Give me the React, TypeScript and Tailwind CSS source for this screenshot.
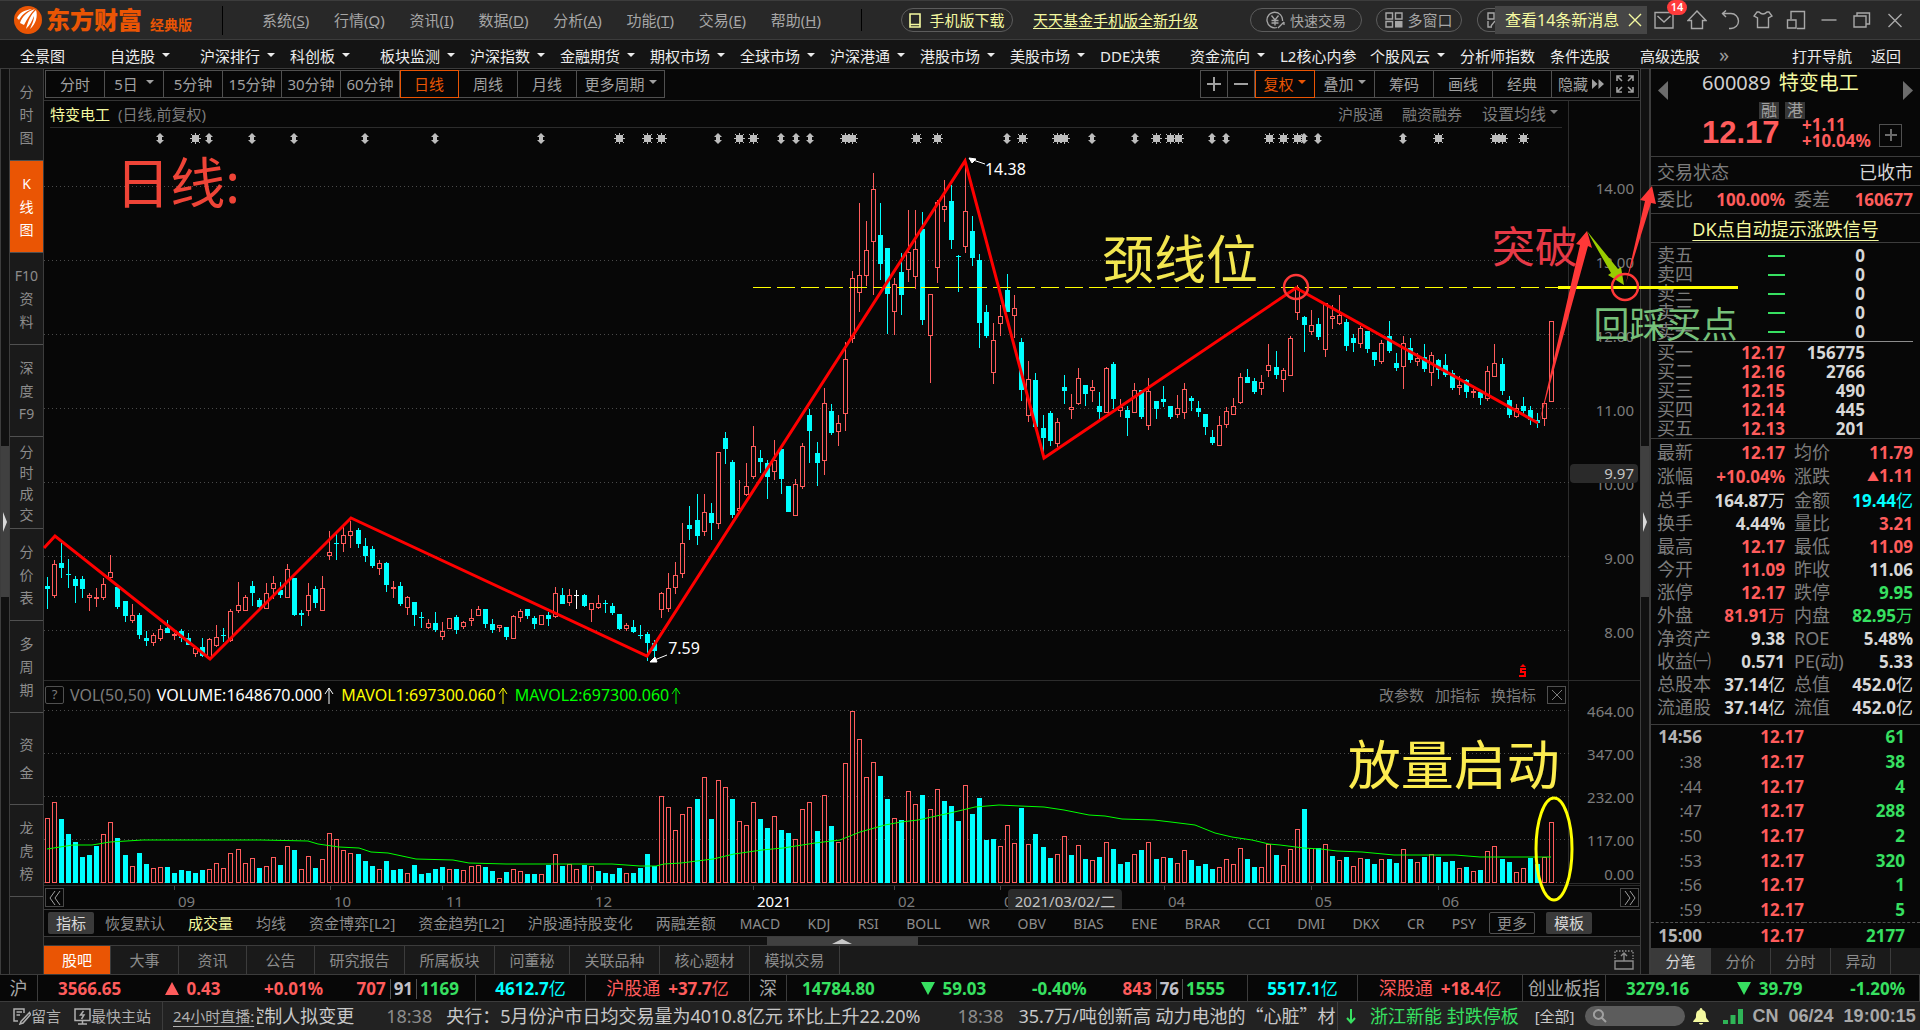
import type { ReactNode } from "react";
import clsx from "clsx";

const UP = "#ff5c5c";
const DOWN = "#00ffff";

// One entry per trading day: kind (r rise, c fall, w flat), then high, body top,
// body bottom and low. Offsets run down from the 13.00 line, 222 steps to one yuan.
const CANDLES = `
c 950 978 987 1047,r 900 912 1007 1014,c 850 909 924 953,c 897 941 944 983,c 948 957 978 1028,c 948 957 987 1014,
r 998 1005 1013 1052,r 984 1010 1016 1040,r 953 972 1014 1020,r 885 936 954 960,c 978 980 1041 1047,c 1023 1023 1068 1086,
r 1032 1065 1083 1089,c 1060 1065 1125 1137,c 1113 1134 1143 1158,r 1120 1126 1149 1158,r 1095 1107 1137 1143,c 1080 1104 1119 1119,
r 1118 1121 1128 1140,c 1108 1113 1134 1146,c 1120 1134 1155 1156,r 1158 1163 1182 1190,c 1134 1161 1188 1191,r 1134 1137 1194 1196,
r 1095 1131 1158 1161,c 1104 1125 1128 1146,r 1048 1053 1143 1146,r 966 1035 1053 1059,r 1005 1011 1053 1053,c 963 978 999 1038,
c 1014 1020 1041 1044,r 969 999 1047 1047,r 948 969 987 1017,c 966 990 1005 1014,r 912 927 1014 1014,c 953 953 1065 1068,
c 1050 1059 1065 1098,r 969 1005 1053 1068,c 978 987 1029 1044,r 948 984 1053 1053,r 813 876 888 900,c 822 849 852 900,
r 800 825 852 876,r 783 813 827 864,c 804 810 852 864,c 834 858 888 906,c 858 867 918 924,r 900 909 927 945,
c 906 909 975 996,r 963 981 986 1014,c 966 978 1032 1038,r 1008 1011 1043 1065,c 1026 1026 1065 1098,c 1056 1071 1074 1104,
r 1077 1089 1104 1107,c 1056 1089 1110 1116,r 1086 1113 1131 1140,r 1074 1074 1107 1107,c 1065 1071 1110 1122,r 1083 1086 1102 1107,
r 1047 1074 1083 1098,r 1038 1047 1068 1068,c 1047 1047 1092 1104,c 1077 1092 1110 1119,r 1094 1096 1103 1116,c 1101 1101 1131 1140,
r 1065 1068 1137 1137,r 1047 1053 1074 1086,c 1047 1047 1068 1077,c 1068 1074 1092 1107,r 1065 1065 1095 1095,c 1056 1065 1077 1098,
r 981 999 1071 1074,c 984 1005 1032 1032,r 987 1005 1029 1038,w 990 1005 1008 1047,c 1002 1005 1038 1041,r 1028 1030 1050 1086,
r 1005 1029 1043 1047,c 1020 1028 1031 1059,c 1028 1038 1059 1065,c 1062 1062 1107 1110,r 1089 1095 1107 1112,c 1080 1101 1116 1119,
c 1095 1125 1128 1137,c 1116 1122 1149 1203,c 1140 1150 1173 1194,r 997 1000 1049 1074,r 939 985 1046 1055,r 906 946 983 1001,
r 789 850 941 953,c 738 795 807 840,c 702 780 828 855,r 702 757 815 828,c 729 759 789 840,r 576 577 791 807,
c 516 534 567 612,c 600 606 765 773,r 660 745 752 757,r 609 679 704 709,r 498 559 650 657,c 570 594 606 639,
c 600 609 651 717,r 540 600 635 660,c 560 567 657 702,c 678 678 756 756,r 657 673 767 767,r 549 559 680 687,
c 447 465 513 609,c 546 579 609 678,r 384 430 602 645,c 432 453 519 525,r 465 490 517 558,r 246 298 461 513,
r 33 55 236 249,r -171 46 98 156,r -117 -30 47 78,r -261 -212 -53 105,c -171 -75 12 60,c -37 -37 102 222,
r 54 73 155 225,c -20 36 105 165,r -150 -23 29 66,r -150 -32 52 87,c -144 -93 180 195,r 102 102 227 369,
r -180 -174 23 69,r -240 -161 -151 -115,c -225 -177 -60 -33,c -15 -12 -9 96,r -306 -147 -40 -21,c -132 -87 -6 18,
c -18 -1 189 264,c 135 156 228 234,r 189 240 338 372,r 135 169 191 228,c 42 90 156 156,r 105 145 167 234,
c 234 246 390 423,r 303 358 467 486,c 339 360 501 501,c 465 504 534 590,c 453 459 543 558,r 474 487 551 561,
c 345 381 393 432,r 402 442 449 477,r 324 355 431 435,c 375 375 402 438,r 360 382 392 426,c 396 438 456 477,
r 321 325 458 458,c 306 312 417 447,r 417 440 452 471,c 438 450 474 528,r 369 391 458 458,c 390 390 471 477,
r 354 394 497 510,c 423 423 447 477,c 378 417 426 441,c 438 438 471 477,r 405 445 464 474,r 369 388 458 477,
c 408 414 423 453,c 423 444 456 471,c 462 462 501 525,c 510 531 549 555,r 468 496 557 557,r 441 454 494 504,
r 414 439 464 464,r 339 352 428 432,c 327 351 369 369,c 354 363 396 402,r 345 367 386 405,r 252 316 332 351,
c 273 321 345 357,r 325 330 361 395,r 228 235 347 347,r 75 85 158 180,c 168 171 195 276,r 150 195 215 225,
c 174 192 231 240,r 130 130 269 290,r 135 169 178 207,r 105 166 191 195,c 177 186 258 273,c 222 233 248 276,
r 198 205 251 264,c 213 213 267 279,c 276 276 300 318,r 240 250 305 312,c 183 228 273 279,c 279 309 324 333,
r 228 250 320 387,c 234 264 300 309,r 280 295 305 318,c 252 290 327 336,r 276 286 338 378,c 297 300 330 357,
c 282 316 345 351,c 330 340 384 390,r 348 375 384 405,c 357 360 396 414,r 387 393 399 414,c 393 395 414 435,
r 318 334 416 422,r 252 310 352 352,c 294 312 393 405,c 408 420 465 474,r 432 445 470 474,c 411 438 453 465,
c 438 450 480 495,c 459 480 489 504,r 424 430 476 498,r 184 184 426 426`
  .trim()
  .split(",")
  .map((row) => {
    const [kind, ...rest] = row.trim().split(" ");
    const [high, top, bottom, low] = rest.map(Number);
    return { kind, high, top, bottom, low };
  });

// Daily volume in the same order; positive is a rising day, negative a falling one.
const VOLUMES = [
  196, 244, -191, -146, -122, -77, -83, -110, 148, 184, -134, -83, 50, -89, -56, 44, 47, -47, -29, -38, -35, -29, -38, 41, 61,
  44, 91, 103, 59, 76, -44, 52, 79, -53, 112, -98, 41, 82, -44, 73, 151, 133, 100, 89, -86, -65, -50, 41, -65, -38, -41, 29,
  -53, -26, -29, -41, -47, 41, -41, 38, 50, 55, -47, -35, 16, -32, 41, 35, -26, -26, 26, -53, 86, -50, 58, 43, -53, 52, -35,
  -29, -26, -44, 29, -29, -44, -86, -50, 262, 229, 160, 208, 229, -251, 319, -191, 310, 289, -251, 187, 175, 244, -191, -164,
  202, -158, -149, 133, 223, 244, -155, 265, -170, 124, 361, 517, 433, 319, 364, -320, -251, 196, -188, 277, 238, -263, 223,
  283, -245, -230, -185, 295, -206, -254, -128, -131, 112, 175, 121, -224, 118, -146, -107, -74, 88, 142, -83, 115, -71, 70,
  -77, 124, -101, -56, -62, 88, -98, 124, -71, 79, -74, 61, 100, -68, -50, -56, -41, 49, 73, 58, 106, -71, -47, 49, 118, -83,
  55, 103, 163, -221, 106, -104, 118, -80, 70, -77, 52, 76, -71, -56, 73, -71, -59, 103, -71, 64, -77, 88, -77, -62, -65, 46,
  -47, 37, -38, 97, 112, -71, -62, 34, 46, -74, -56, 79, 184,
];

const MAVOL =
  "47,849 73,845 92,845 110,842 143,840 261,840 308,841 318,844 339,847 359,848 371,852 388,853 416,859 453,860 469,863 506,864 580,864 612,864 640,866 656,866 664,864 681,863 713,859 734,854 762,850 783,848 815,843 840,840 860,832 885,825 901,822 918,820 950,813 975,807 999,805 1020,806 1044,807 1064,810 1089,815 1105,816 1122,819 1154,820 1171,822 1195,825 1215,833 1232,837 1252,840 1269,844 1280,845 1304,848 1321,849 1337,851 1362,852 1394,855 1455,855 1480,857 1551,857";

const ARROWS = [160, 209, 252, 294, 365, 435, 541, 718, 781, 796, 810, 1007, 1092, 1135, 1212, 1226, 1304, 1318, 1403];
const STARS = [
  195, 619, 647, 661, 739, 753, 845, 852, 916, 937, 1022, 1057, 1064, 1156, 1170, 1178, 1269, 1283, 1297, 1438, 1495, 1502, 1523,
];

const barX = (i: number) => Math.floor(47.35 + i * 7.0615);

const MENUS = [
  ["系统", "S"],
  ["行情", "Q"],
  ["资讯", "I"],
  ["数据", "D"],
  ["分析", "A"],
  ["功能", "T"],
  ["交易", "E"],
  ["帮助", "H"],
];

const NAV: [string, boolean][] = [
  ["全景图", false],
  ["自选股", true],
  ["沪深排行", true],
  ["科创板", true],
  ["板块监测", true],
  ["沪深指数", true],
  ["金融期货", true],
  ["期权市场", true],
  ["全球市场", true],
  ["沪深港通", true],
  ["港股市场", true],
  ["美股市场", true],
  ["DDE决策", false],
  ["资金流向", true],
  ["L2核心内参", false],
  ["个股风云", true],
  ["分析师指数", false],
  ["条件选股", false],
  ["高级选股", false],
];

const SIDE: { chars: string[]; leading: string; active?: boolean }[] = [
  { chars: ["分", "时", "图"], leading: "leading-[23px]" },
  { chars: ["K", "线", "图"], leading: "leading-[23px]", active: true },
  { chars: ["F10", "资", "料"], leading: "leading-[23px]" },
  { chars: ["深", "度", "F9"], leading: "leading-[23px]" },
  { chars: ["分", "时", "成", "交"], leading: "leading-[21px]" },
  { chars: ["分", "价", "表"], leading: "leading-[23px]" },
  { chars: ["多", "周", "期"], leading: "leading-[23px]" },
  { chars: ["资", "金"], leading: "leading-[28px]" },
  { chars: ["龙", "虎", "榜"], leading: "leading-[23px]" },
];

const PERIODS = ["分时", "5日", "5分钟", "15分钟", "30分钟", "60分钟", "日线", "周线", "月线"];

const MONTHS: [string, number][] = [
  ["09", 174],
  ["10", 330],
  ["11", 442],
  ["12", 591],
  ["2021", 753],
  ["02", 894],
  ["03", 1000],
  ["04", 1164],
  ["05", 1311],
  ["06", 1438],
];

const FUND_INDICATORS = ["恢复默认", "成交量", "均线", "资金博弈[L2]", "资金趋势[L2]", "沪股通持股变化", "两融差额"];
const TECH_INDICATORS = [
  "MACD", "KDJ", "RSI", "BOLL", "WR", "OBV", "BIAS", "ENE", "BRAR", "CCI", "DMI", "DKX", "CR", "PSY",
];

const TABS: [string, string][] = [
  ["股吧", "w-[67px]"],
  ["大事", "w-[68px]"],
  ["资讯", "w-[68px]"],
  ["公告", "w-[68px]"],
  ["研究报告", "w-[90px]"],
  ["所属板块", "w-[90px]"],
  ["问董秘", "w-[75px]"],
  ["关联品种", "w-[90px]"],
  ["核心题材", "w-[90px]"],
  ["模拟交易", "w-[90px]"],
];

const SELLS = ["卖五", "卖四", "卖三", "卖二", "卖一"];
const BUYS = [
  ["买一", "12.17", "156775"],
  ["买二", "12.16", "2766"],
  ["买三", "12.15", "490"],
  ["买四", "12.14", "445"],
  ["买五", "12.13", "201"],
];

const red = "text-[#ff5c5c]";
const green = "text-[#37e061]";
const white = "text-[#d8d8d8]";
const cyan = "text-[#00ffff]";

const STATS = [
  ["最新", "12.17", red, "均价", "11.79", red],
  ["涨幅", "+10.04%", red, "涨跌", "▲1.11", red],
  ["总手", "164.87万", white, "金额", "19.44亿", cyan],
  ["换手", "4.44%", white, "量比", "3.21", red],
  ["最高", "12.17", red, "最低", "11.09", red],
  ["今开", "11.09", red, "昨收", "11.06", white],
  ["涨停", "12.17", red, "跌停", "9.95", green],
  ["外盘", "81.91万", red, "内盘", "82.95万", green],
  ["净资产", "9.38", white, "ROE", "5.48%", white],
  ["收益㈠", "0.571", white, "PE(动)", "5.33", white],
  ["总股本", "37.14亿", white, "总值", "452.0亿", white],
  ["流通股", "37.14亿", white, "流值", "452.0亿", white],
];

const TICKS = [
  ["14:56", "61"],
  [":38", "38"],
  [":44", "4"],
  [":47", "288"],
  [":50", "2"],
  [":53", "320"],
  [":56", "1"],
  [":59", "5"],
  ["15:00", "2177"],
];

function Caret({ className }: { className?: string }) {
  return (
    <svg viewBox="0 0 8 4" className={clsx("h-1 w-2 shrink-0", className)} fill="currentColor" aria-hidden="true">
      <path d="M0 0H8L4 4Z" />
    </svg>
  );
}

function Icon({ label, children }: { label: string; children: ReactNode }) {
  return (
    <button aria-label={label} className="flex h-8 w-[33px] items-center justify-center text-[#a8a8a8]">
      <svg viewBox="0 0 20 20" className="size-5" fill="none" stroke="currentColor" strokeWidth="1.4">
        {children}
      </svg>
    </button>
  );
}

// The figure is bold, its 万/亿 unit is not.
function Amount({ value }: { value: string }) {
  const unit = /[万亿]$/.test(value) ? value.slice(-1) : "";
  return (
    <>
      {unit ? value.slice(0, -1) : value}
      {unit && <span className="font-normal">{unit}</span>}
    </>
  );
}

function TitleBar() {
  return (
    <header className="flex h-10 items-center border-t border-b border-[#3c3c3c] bg-[#282828] pl-[14px] text-[16px] text-[#a6a6a6]">
      <div className="flex w-[209px] items-center border-r border-black text-[#ea5504]">
        <svg viewBox="0 0 28 28" className="size-7 shrink-0" aria-hidden="true">
          <circle cx="14" cy="14" r="14" fill="#ea5504" />
          <path d="M3 12C5 7 10 4 18 3C11 6 8 9 5 14Z" fill="#fff" />
          <path d="M6 17C8 11 12 6 21 3C16 8 13 13 10 19Z" fill="#fff" />
          <path d="M12 23C14 15 17 8 22 4C24 10 22 18 16 23C19 17 20 13 20 10C18 15 16 19 12 23Z" fill="#fff" />
        </svg>
        <b className="ml-1 text-[24px] leading-7 font-black whitespace-nowrap">东方财富</b>
        <span className="mt-2 ml-2 text-[14px] font-bold whitespace-nowrap">经典版</span>
      </div>
      <nav className="flex w-[639px] shrink-0 items-center justify-between border-r border-black pr-[40px] pl-[39px] text-[15px]">
        {MENUS.map(([name, key]) => (
          <button key={key} className="whitespace-nowrap">
            {name}(<u>{key}</u>)
          </button>
        ))}
      </nav>
      <button className="ml-[39px] flex h-6 w-[112px] shrink-0 items-center justify-center gap-2 rounded-full border border-[#5c5c5c] text-[15px] text-[#f4f9a0]">
        <svg viewBox="0 0 12 15" className="h-[15px] w-3" fill="none" stroke="currentColor" strokeWidth="1.6" aria-hidden="true">
          <path d="M1 1H11V14H1ZM1 11.5H11" />
        </svg>
        手机版下载
      </button>
      <a href="#fund" className="ml-[20px] text-[15px] whitespace-nowrap text-[#f4f9a0] underline underline-offset-2">
        天天基金手机版全新升级
      </a>
      <div className="flex flex-1 items-center justify-end">
        <button className="flex h-6 w-[112px] shrink-0 items-center justify-center gap-1 rounded-full border border-[#5c5c5c] text-[14px]">
          <svg viewBox="0 0 20 18" className="h-[18px] w-5" fill="none" stroke="currentColor" strokeWidth="1.3" aria-hidden="true">
            <path d="M11 16.5A7.8 7.8 0 1 1 16.5 10M5.5 4.5L9 9L12.5 4.5M5.5 9.5H12.5M5.5 12H12.5M9 9V14.5M12 17L18 11M18 11V14" />
          </svg>
          快速交易
        </button>
        <button className="ml-[14px] flex h-6 w-[86px] shrink-0 items-center justify-center gap-1 rounded-full border border-[#5c5c5c] text-[15px]">
          <svg viewBox="0 0 18 16" className="h-4 w-[18px]" fill="none" stroke="currentColor" strokeWidth="1.4" aria-hidden="true">
            <path d="M1 1H7.500V7H1ZM10.500 1H17V7H10.500ZM1 9.500H7.500V15H1Z" />
            <path d="M10 9H17.500V15.500H10Z" fill="currentColor" stroke="none" />
          </svg>
          多窗口
        </button>
        <div className="ml-[15px] flex h-6 w-[18px] shrink-0 items-center rounded-l-full border border-r-0 border-[#5c5c5c] pl-[9px]">
          <svg viewBox="0 0 8 16" className="h-4 w-2" fill="none" stroke="currentColor" strokeWidth="1.4" aria-hidden="true">
            <path d="M7 1H1V7H7ZM1 9V15H5M4 14L8 9" />
          </svg>
        </div>
        <div className="flex h-7 w-[152px] shrink-0 items-center justify-between bg-[#464646] pr-[5px] pl-[10px] text-[16px] text-[#f4f9a0]">
          <span className="whitespace-nowrap">查看14条新消息</span>
          <button aria-label="关闭消息">
            <svg viewBox="0 0 14 14" className="size-[14px]" fill="none" stroke="currentColor" strokeWidth="1.4">
              <path d="M1 1L13 13M13 1L1 13" />
            </svg>
          </button>
        </div>
        <div className="relative flex">
          <Icon label="消息">
            <path d="M1 2.500H19V18H1ZM3.500 6L10 12L16.500 6" />
          </Icon>
          <span className="absolute -top-1 left-[20px] flex h-[15px] w-5 items-center justify-center rounded-full bg-[#ff3b3b] text-[11px] font-semibold text-white">
            14
          </span>
        </div>
        <Icon label="主页">
          <path d="M10 1L1 10.500H4.500V18.500H15.500V10.500H19Z" />
        </Icon>
        <Icon label="后退">
          <path d="M2 3.500H11A7.500 7.500 0 0 1 11 18.500H9M6 0.500L2.500 3.500L6 7" />
        </Icon>
        <Icon label="皮肤">
          <path d="M6 2Q10 6 14 2H16L19 6L15.500 8V17.500H4.500V8L1 6L4 2Z" />
        </Icon>
        <Icon label="窗口">
          <path d="M5 9V1.500H18.500V18.500H11M1.500 10H10V18H1.500Z" />
        </Icon>
        <Icon label="最小化">
          <path d="M2.500 10H17.500" />
        </Icon>
        <Icon label="还原">
          <path d="M2 6H14V17H2ZM5 6V3H17.500V14H14" />
        </Icon>
        <Icon label="关闭">
          <path d="M3.500 4L16.500 17M16.500 4L3.500 17" />
        </Icon>
        <span className="w-[9px]" />
      </div>
    </header>
  );
}

function MainNav() {
  return (
    <nav className="flex h-[29px] items-center border-b border-[#3c3c3c] bg-[#141414] pt-[5px] pl-5 text-[15px] text-[#ececec]">
      <div className="grid min-w-0 flex-1 grid-cols-[repeat(18,90fr)_79fr]">
        {NAV.map(([label, hasMenu]) => (
          <button key={label} className="flex min-w-0 items-center gap-[7px] whitespace-nowrap">
            {label}
            {hasMenu && <Caret className="mb-1" />}
          </button>
        ))}
      </div>
      <button className="w-[73px] pb-1 text-left text-[20px] leading-5 text-[#9a9a9a]">»</button>
      <button className="w-[79px] text-left whitespace-nowrap">打开导航</button>
      <button className="w-[49px] text-left">返回</button>
    </nav>
  );
}

function Toolbar() {
  const cell = "flex h-7 items-center justify-center border border-l-0 border-[#505050] whitespace-nowrap";
  return (
    <div className="flex h-8 items-start justify-between border-b border-[#333] pt-px pl-px text-[15px] text-[#a0a0a0]">
      <div className="flex border-l border-[#505050]">
        {PERIODS.map((label) => (
          <button
            key={label}
            className={clsx(
              cell,
              "w-[59px]",
              label === "日线" && "border-[#ea5504]! text-[#ea5504] outline outline-[#ea5504] -outline-offset-1",
            )}
          >
            {label}
            {label === "5日" && <Caret className="mb-1 ml-2" />}
          </button>
        ))}
        <button className={clsx(cell, "w-[88px]")}>
          更多周期
          <Caret className="mb-1 ml-1" />
        </button>
      </div>
      <div className="mr-px flex border-l border-[#505050]">
        <button aria-label="放大" className={clsx(cell, "w-[27px]")}>
          <svg viewBox="0 0 14 14" className="size-[14px]" stroke="currentColor" strokeWidth="2">
            <path d="M7 0V14M0 7H14" />
          </svg>
        </button>
        <button aria-label="缩小" className={clsx(cell, "w-[27px]")}>
          <svg viewBox="0 0 14 14" className="size-[14px]" stroke="currentColor" strokeWidth="2">
            <path d="M0 7H14" />
          </svg>
        </button>
        <button className={clsx(cell, "w-[60px] border-[#ea5504]! text-[#ea5504] outline outline-[#ea5504] -outline-offset-1")}>
          复权
          <Caret className="mb-1 ml-1" />
        </button>
        <button className={clsx(cell, "w-[60px]")}>
          叠加
          <Caret className="mb-1 ml-1" />
        </button>
        {["筹码", "画线", "经典"].map((label) => (
          <button key={label} className={clsx(cell, "w-[59px]")}>
            {label}
          </button>
        ))}
        <button className={clsx(cell, "w-[59px] gap-1")}>
          隐藏
          <svg viewBox="0 0 12 10" className="h-[10px] w-3" fill="currentColor" aria-hidden="true">
            <path d="M0 0L5.500 5L0 10ZM6.500 0L12 5L6.500 10Z" />
          </svg>
        </button>
        <button aria-label="全屏" className={clsx(cell, "w-7")}>
          <svg viewBox="0 0 18 18" className="size-[18px]" fill="none" stroke="currentColor" strokeWidth="1.6">
            <path d="M1 6V1H6M1 1L6 6M12 1H17V6M17 1L12 6M1 12V17H6M1 17L6 12M17 12V17H12M17 17L12 12" />
          </svg>
        </button>
      </div>
    </div>
  );
}

function PriceChart() {
  return (
    <svg viewBox="44 128 1524 552" preserveAspectRatio="none" className="block h-[552px] w-full overflow-visible">
      <g stroke="#4a4a4a" strokeDasharray="1 3" shapeRendering="crispEdges">
        {[186, 260, 334, 408, 482, 556, 630].map((y) => (
          <line key={y} x1="44" x2="1571" y1={y + 0.5} y2={y + 0.5} />
        ))}
      </g>
      <g fill="#bdbdbd">
        {ARROWS.map((x) => (
          <path key={x} d={`M${x} 133l4 4h-2v3h2l-4 4l-4 -4h2v-3h-2Z`} />
        ))}
        {STARS.map((x) => (
          <g key={x}>
            <rect x={x - 3} y="135" width="7" height="7" />
            <path d={`M${x + 0.5} 133V144M${x - 5} 138.500H${x + 6}M${x - 4} 134L${x + 5} 143M${x + 5} 134L${x - 4} 143`} stroke="#bdbdbd" />
          </g>
        ))}
      </g>
      <g shapeRendering="crispEdges">
        {CANDLES.map(({ kind, high, top, bottom, low }, i) => {
          const x = barX(i);
          const y = (v: number) => Math.round(260 + v / 3);
          const color = kind === "r" ? UP : kind === "c" ? DOWN : "#fff";
          const body = Math.max(1, y(bottom) - y(top));
          return (
            <g key={i} fill={color}>
              <rect x={x} y={y(high)} width="1" height={Math.max(1, y(low) - y(high))} />
              <rect x={x - 2} y={y(top)} width="5" height={body} />
              {kind === "r" && body > 2 && <rect x={x - 1} y={y(top) + 1} width="3" height={body - 2} fill="#070707" />}
            </g>
          );
        })}
      </g>
      <line x1="753" x2="1568" y1="287.500" y2="287.500" stroke="#ffff00" strokeDasharray="18 6" shapeRendering="crispEdges" />
      <polyline
        points="44,548 55,536 210,659 351,518 647,656 965,161 1044,458 1296,288 1538,423"
        fill="none"
        stroke="#ff0000"
        strokeWidth="3"
      />
      <g stroke="#fff" fill="#fff" strokeWidth="1">
        <path d="M985 164L970 159M969 158L976 159L972 163Z" />
        <path d="M667 655L652 661M650 662L655 657L657 662Z" />
      </g>
      <g fill="none" stroke="#ff0000" strokeWidth="2">
        <path d="M1526 669H1521V672H1525V676H1519" />
        <path d="M1523 664L1526 667H1520Z" fill="#ff0000" stroke="none" />
      </g>
    </svg>
  );
}

function VolumeChart() {
  return (
    <svg viewBox="44 709 1524 176" preserveAspectRatio="none" className="block h-[176px] w-full overflow-visible">
      <g stroke="#4a4a4a" strokeDasharray="1 3" shapeRendering="crispEdges">
        {[710, 753, 796, 839, 882].map((y) => (
          <line key={y} x1="44" x2="1571" y1={y + 0.5} y2={y + 0.5} />
        ))}
      </g>
      <g shapeRendering="crispEdges">
        {VOLUMES.map((volume, i) => {
          const x = barX(i);
          const h = Math.round(Math.abs(volume) / 3);
          return (
            <g key={i} fill={volume > 0 ? UP : DOWN}>
              <rect x={x - 2} y={883 - h} width="5" height={h} />
              {volume > 0 && <rect x={x - 1} y={884 - h} width="3" height={h - 2} fill="#070707" />}
            </g>
          );
        })}
      </g>
      <polyline points={MAVOL} fill="none" stroke="#00ff00" strokeWidth="1" />
    </svg>
  );
}

function Rise({ className }: { className: string }) {
  return (
    <svg viewBox="0 0 10 17" className={clsx("mr-[7px] ml-[2px] h-[17px] w-[10px]", className)} fill="none" stroke="currentColor" aria-hidden="true">
      <path d="M5 17V1M1 7L5 1L9 7" />
    </svg>
  );
}

function ChartArea() {
  return (
    <>
      <div className="flex">
        <div className="min-w-0 flex-1 border-r border-[#2c2c2c]">
          <div className="mx-[6px] flex h-[27px] items-center justify-between border-b border-[#2c2c2c] text-[15px] text-[#7c7c7c]">
            <div>
              <span className="text-[#f4f9a0]">特变电工</span>
              <span className="ml-2">(日线,前复权)</span>
            </div>
            <div className="mr-1 flex items-center">
              <span>沪股通</span>
              <span className="ml-[19px]">融资融券</span>
              <button className="ml-[20px] flex items-center gap-1 text-[16px]">
                设置均线 <Caret className="mb-1" />
              </button>
            </div>
          </div>
          <PriceChart />
        </div>
        <div className="relative w-[71px] pt-[50px] pr-[6px] text-right text-[15px] text-[#7c7c7c]">
          {["14.00", "13.00", "12.00", "11.00", "10.00", "9.00", "8.00"].map((p) => (
            <div key={p} className="h-[74px] leading-[74px]">
              {p}
            </div>
          ))}
          <div className="absolute top-[363px] right-[2px] left-px h-[19px] rounded-sm bg-[#2a2a2a] pr-1 leading-[19px] text-[#c4c4c4]">
            9.97
          </div>
        </div>
      </div>
      <div className="flex border-t border-[#2c2c2c]">
        <div className="min-w-0 flex-1 border-r border-[#2c2c2c]">
          <div className="flex h-7 items-center pr-[2px] pl-[1px] text-[15px] text-[#7c7c7c]">
            <button className="flex h-[18px] w-[19px] items-center justify-center rounded-xs border border-[#505050] text-[13px]">?</button>
            <div className="ml-[6px] flex items-center text-[16px]">
              <span className="mr-[6px]">VOL(50,50)</span>
              <span className="text-white">VOLUME:1648670.000</span>
              <Rise className="text-white" />
              <span className="text-[#ffff00]">MAVOL1:697300.060</span>
              <Rise className="text-[#ffff00]" />
              <span className="text-[#00ff00]">MAVOL2:697300.060</span>
              <Rise className="text-[#00ff00]" />
            </div>
            <span className="flex-1" />
            <button>改参数</button>
            <button className="ml-[11px]">加指标</button>
            <button className="ml-[11px]">换指标</button>
            <button aria-label="关闭指标" className="ml-[11px] flex h-[18px] w-[19px] items-center justify-center border border-[#505050]">
              <svg viewBox="0 0 10 10" className="size-[10px]" stroke="currentColor">
                <path d="M0 0L10 10M10 0L0 10" />
              </svg>
            </button>
          </div>
          <VolumeChart />
        </div>
        <div className="mb-px w-[71px] border-b border-[#2c2c2c] pt-[9px] pr-[6px] text-right text-[15px] text-[#7c7c7c]">
          {["464.00", "347.00", "232.00", "117.00"].map((v) => (
            <div key={v} className="h-[43px] leading-[43px]">
              {v}
            </div>
          ))}
          <div className="h-5 leading-6">0.00</div>
        </div>
      </div>
      <div className="relative flex h-6 items-center justify-between border-t border-[#2c2c2c] px-px text-[15px] text-[#7c7c7c]">
        <button aria-label="更早" className="flex h-[19px] w-[19px] items-center justify-center border border-[#484848]">
          <svg viewBox="0 0 12 14" className="h-[14px] w-3" fill="none" stroke="#a0a0a0">
            <path d="M6 0L1 7L6 14M11 0L6 7L11 14" />
          </svg>
        </button>
        {MONTHS.map(([label, x]) => (
          <span
            key={label}
            className={clsx("absolute top-0 h-[23px] pl-1 leading-[30px]", label === "2021" && "text-white")}
            style={{ left: `${((x - 44) / 1596) * 100}%` }}
          >
            <i className="absolute top-0 left-0 h-1 w-px bg-[#484848]" />
            {label}
          </span>
        ))}
        <span className="absolute top-[3px] left-[60.4%] h-5 w-[114px] rounded-t-sm bg-[#2a2a2a] text-center leading-6 text-[#c4c4c4]">
          2021/03/02/二
        </span>
        <button aria-label="更晚" className="flex h-[19px] w-[19px] items-center justify-center border border-[#484848]">
          <svg viewBox="0 0 12 14" className="h-[14px] w-3" fill="none" stroke="#a0a0a0">
            <path d="M1 0L6 7L1 14M6 0L11 7L6 14" />
          </svg>
        </button>
      </div>
    </>
  );
}

function BottomBars() {
  return (
    <>
      <div className="flex h-[27px] items-center border-t border-[#3c3c3c] pl-1 text-[15px] whitespace-nowrap text-[#8c8c8c]">
        <button className="h-[22px] w-[46px] rounded-xs bg-[#3a3a3a] leading-[22px] text-[#d8d8d8]">指标</button>
        <div className="ml-[11px] flex shrink-0 items-center gap-[23px]">
          {FUND_INDICATORS.map((name) => (
            <button key={name} className={clsx(name === "成交量" && "text-[#f4f9a0]")}>
              {name}
            </button>
          ))}
        </div>
        <div className="ml-6 flex min-w-0 flex-1 items-center justify-between pr-[13px] text-[14px]">
          {TECH_INDICATORS.map((name) => (
            <button key={name}>{name}</button>
          ))}
        </div>
        <button className="h-[22px] w-[46px] rounded-xs border border-[#505050] leading-5">更多</button>
        <button className="mr-[48px] ml-[11px] h-[22px] w-[46px] rounded-xs bg-[#3a3a3a] leading-[22px] text-[#d8d8d8]">模板</button>
      </div>
      <div className="flex h-[10px] justify-center border-y border-[#3c3c3c] bg-[#111]">
        <button aria-label="展开" className="flex w-[151px] items-center justify-center bg-[#404040]">
          <svg viewBox="0 0 20 5" className="h-[5px] w-5" fill="#c8c8c8">
            <path d="M10 0L20 5H0Z" />
          </svg>
        </button>
      </div>
      <div className="flex h-7 items-center bg-[#1a1a1a] text-[15px] text-[#8c8c8c]">
        {TABS.map(([label, width], i) => (
          <button
            key={label}
            className={clsx("h-full border-r border-[#3c3c3c]", width, i === 0 && "bg-[#ea5504] text-white")}
          >
            {label}
          </button>
        ))}
        <button aria-label="弹出" className="mr-[6px] ml-auto">
          <svg viewBox="0 0 20 20" className="size-5" fill="none" stroke="#8c8c8c" strokeWidth="1.4">
            <path d="M1 19V11H19V19Z" />
            <path d="M1 9V1H19V9" strokeDasharray="1.500 1.500" />
            <path d="M10 11V3M7 6L10 3L13 6" />
          </svg>
        </button>
      </div>
    </>
  );
}

function Splitter({ label }: { label: string }) {
  return (
    <div className="flex w-[10px] shrink-0 items-center border-x border-[#3c3c3c] bg-[#111]">
      <button aria-label={label} className="flex h-[151px] w-full items-center justify-center bg-[#404040]">
        <svg viewBox="0 0 4 20" className="h-5 w-1" fill="#d8d8d8">
          <path d="M0 0L4 10L0 20Z" />
        </svg>
      </button>
    </div>
  );
}

function QuotePanel() {
  return (
    <aside className="flex w-[270px] shrink-0 flex-col border-l border-[#3c3c3c] text-[17px] text-[#7c7c7c]">
      <div className="flex h-[88px] border-b border-[#3c3c3c] px-[7px]">
        <button aria-label="上一只" className="mt-3 h-[19px] w-[10px]">
          <svg viewBox="0 0 10 19" fill="#6c6c6c">
            <path d="M10 0V19L0 9.500Z" />
          </svg>
        </button>
        <div className="min-w-0 flex-1">
          <h1 className="flex h-[28px] items-center gap-2 pl-[34px] text-[20px] text-[#d0d0d0]">
            600089 <span className="text-[#f4f9a0]">特变电工</span>
          </h1>
          <div className="mt-[5px] ml-[91px] flex h-[17px] gap-[6px] text-center text-[16px] leading-[17px] text-[#a0a0a0]">
            <span className="w-5 bg-[#363636]">融</span>
            <span className="w-5 bg-[#363636]">港</span>
          </div>
          <div className="ml-[34px] flex h-7 items-center font-bold text-[#ff5c5c]">
            <span className="w-[100px] font-['Liberation_Sans',sans-serif] text-[31px] leading-7">12.17</span>
            <span className="w-[77px] leading-4">
              +1.11
              <br />
              +10.04%
            </span>
            <button aria-label="加自选" className="mt-1 flex size-[23px] shrink-0 items-center justify-center border border-[#505050]">
              <svg viewBox="0 0 12 12" className="size-3" stroke="#6c6c6c" strokeWidth="2">
                <path d="M6 0V12M0 6H12" />
              </svg>
            </button>
          </div>
        </div>
        <button aria-label="下一只" className="mt-3 h-[19px] w-[10px]">
          <svg viewBox="0 0 10 19" fill="#6c6c6c">
            <path d="M0 0V19L10 9.500Z" />
          </svg>
        </button>
      </div>
      <div className="flex h-[29px] items-center justify-between border-b border-[#3c3c3c] pt-[2px] pr-[7px] pl-[6px] text-[18px]">
        交易状态 <span className={white}>已收市</span>
      </div>
      <div className="flex h-[28px] items-center border-b border-[#3c3c3c] pr-[7px] pl-[6px] text-[18px]">
        委比
        <b className="w-[92px] text-right text-[17px] text-[#ff5c5c]">100.00%</b>
        <span className="ml-[9px]">委差</span>
        <b className="flex-1 text-right text-[17px] text-[#ff5c5c]">160677</b>
      </div>
      <div className="flex h-[29px] items-center justify-center border-b border-[#3c3c3c] pt-[2px] text-[18px] leading-6">
        <a href="#dk" className="text-[#f4f9a0] underline underline-offset-4">
          DK点自动提示涨跌信号
        </a>
      </div>
      <table className="mt-[3px] ml-[6px] w-[256px] table-fixed border-separate border-spacing-0 border-b border-[#8c8c8c] leading-[19px] font-bold">
        <tbody>
          {SELLS.map((name) => (
            <tr key={name} className="h-[19px]">
              <th className="w-12 text-left text-[18px] font-normal">{name}</th>
              <td className="w-20">
                <i className="ml-auto block h-[2px] w-[17px] bg-[#37e061]" />
              </td>
              <td className="w-20 text-right text-[#d8d8d8]">0</td>
              <td />
            </tr>
          ))}
        </tbody>
      </table>
      <table className="mt-px ml-[6px] w-[256px] table-fixed leading-[19px] font-bold">
        <tbody>
          {BUYS.map(([name, price, amount]) => (
            <tr key={name} className="h-[19px]">
              <th className="w-12 text-left text-[18px] font-normal">{name}</th>
              <td className="w-20 text-right text-[#ff5c5c]">{price}</td>
              <td className="w-20 text-right text-[#d8d8d8]">{amount}</td>
              <td />
            </tr>
          ))}
        </tbody>
      </table>
      <div className="border-y border-[#3c3c3c] pt-[2px] pb-[5px] pl-[6px]">
        <table className="w-[256px] table-fixed leading-[23px]">
          <tbody>
            {STATS.map(([a, av, ac, b, bv, bc]) => (
              <tr key={a} className="h-[23px]">
                <th className="w-[54px] text-left text-[18px] font-normal whitespace-nowrap">{a}</th>
                <td className={clsx("w-[74px] text-right font-bold whitespace-nowrap", ac)}>
                  <Amount value={av} />
                </td>
                <th className="w-[56px] pl-[9px] text-left text-[18px] font-normal whitespace-nowrap">{b}</th>
                <td className={clsx("text-right font-bold whitespace-nowrap", bc)}>
                  {bv.startsWith("▲") && <span className="text-[12px]">▲</span>}
                  <Amount value={bv.replace("▲", "")} />
                </td>
              </tr>
            ))}
          </tbody>
        </table>
      </div>
      <table className="h-[223px] w-full table-fixed leading-5">
        <tbody>
          {TICKS.map(([time, amount]) => {
            const full = time.length > 3;
            return (
              <tr key={time} className={clsx(time === "15:00" && "border-t border-dashed border-[#505050]")}>
                <th className={clsx("w-[51px] text-right", full ? "font-bold text-[#b4b4b4]" : "text-[16px] font-normal")}>{time}</th>
                <td className="w-[102px] text-right font-bold text-[#ff5c5c]">12.17</td>
                <td className="pr-[15px] text-right font-bold text-[#37e061]">{amount}</td>
              </tr>
            );
          })}
        </tbody>
      </table>
      <div className="flex h-[26px] bg-[#1a1a1a] text-[15px] text-[#8c8c8c]">
        {["分笔", "分价", "分时", "异动"].map((label, i) => (
          <button key={label} className={clsx("w-[60px] border-r border-[#3c3c3c]", i === 0 && "bg-[#3a3a3a] text-[#d8d8d8]")}>
            {label}
          </button>
        ))}
      </div>
    </aside>
  );
}

// Hand-drawn marks that sit over the chart and the quote panel.
function Annotations() {
  return (
    <div className="pointer-events-none absolute inset-0">
      <svg viewBox="0 69 1920 905" preserveAspectRatio="none" className="absolute size-full" fill="none">
        <path d="M1558 287.500H1738" stroke="#ffff00" strokeWidth="3" />
        <path d="M1539 424L1580 245L1576 244L1587 231L1592 248L1588 246Z" fill="#ff3838" />
        <path d="M1587 231L1611 273L1608 275L1624 285L1621 267L1618 269Z" fill="#99cc00" />
        <path d="M1626 283L1645 201L1640 200L1652 186L1656 204L1651 203Z" fill="#ff3838" />
        <circle cx="1296" cy="287" r="12" stroke="#ff3838" strokeWidth="2.500" />
        <ellipse cx="1625" cy="287" rx="13" ry="13" stroke="#ff3838" strokeWidth="2.500" />
        <ellipse cx="1554" cy="849" rx="18" ry="51" stroke="#ffff00" strokeWidth="3" />
      </svg>
      <span className="absolute top-[83px] left-[6%] text-[55px] leading-[60px] text-[#ee4437]">日线:</span>
      <span className="absolute top-[160px] left-[57.4%] text-[52px] leading-[60px] text-[#f2e650]">颈线位</span>
      <span className="absolute top-[148px] left-[77.7%] text-[43px] leading-[60px] text-[#e63946]">突破</span>
      <span className="absolute top-[226px] left-[83%] text-[36px] leading-[60px] text-[#76c07a]">回踩买点</span>
      <span className="absolute top-[666px] left-[70.2%] text-[53px] leading-[60px] text-[#fcec50]">放量启动</span>
      <span className="absolute top-[88px] left-[51.3%] text-[16px] text-white">14.38</span>
      <span className="absolute top-[567px] left-[34.8%] text-[16px] text-white">7.59</span>
    </div>
  );
}

function IndexCell({ value, dir, diff, pct, up, flat, down, className }: {
  value: string;
  dir: "up" | "down";
  diff: string;
  pct: string;
  up?: string;
  flat?: string;
  down?: string;
  className: string;
}) {
  return (
    <div className={clsx("flex items-center justify-between border-r border-[#3c3c3c]", className, dir === "up" ? red : green)}>
      <span>{value}</span>
      <span className={clsx("flex items-center gap-2", up && "ml-[10px]")}>
        <svg viewBox="0 0 14 13" className="h-[13px] w-[14px]" fill="currentColor" aria-hidden="true">
          <path d={dir === "up" ? "M7 0L14 13H0Z" : "M0 0H14L7 13Z"} />
        </svg>
        {diff}
      </span>
      <span className={clsx(up && "ml-[10px]")}>{pct}</span>
      {up && (
        <span className="flex leading-5">
          <span className="pr-1 text-[#ff5c5c]">{up}</span>
          <span className="border-x border-[#505050] px-[3px] text-[#c0c0c8]">{flat}</span>
          <span className="pl-[3px] text-[#37e061]">{down}</span>
        </span>
      )}
    </div>
  );
}

function IndexBar() {
  const cell = "flex items-center justify-center border-r border-[#3c3c3c] whitespace-nowrap";
  const name = "text-[18px] font-normal text-[#a6a6a6]";
  return (
    <div className="grid h-[27px] grid-cols-[38fr_438fr_110fr_164fr_37fr_461fr_110fr_165fr_83fr_314fr] border-t border-[#3c3c3c] text-[17px] font-bold whitespace-nowrap">
      <div className={clsx(cell, name)}>沪</div>
      <IndexCell value="3566.65" dir="up" diff="0.43" pct="+0.01%" up="707" flat="91" down="1169" className="pr-[16px] pl-[20px]" />
      <div className={clsx(cell, cyan)}>
        <Amount value="4612.7亿" />
      </div>
      <div className={clsx(cell, red)}>
        <span className="mr-2 text-[18px] font-normal">沪股通</span>
        <Amount value="+37.7亿" />
      </div>
      <div className={clsx(cell, name)}>深</div>
      <IndexCell value="14784.80" dir="down" diff="59.03" pct="-0.40%" up="843" flat="76" down="1555" className="pr-[22px] pl-[15px]" />
      <div className={clsx(cell, cyan)}>
        <Amount value="5517.1亿" />
      </div>
      <div className={clsx(cell, red)}>
        <span className="mr-2 text-[18px] font-normal">深股通</span>
        <Amount value="+18.4亿" />
      </div>
      <div className={clsx(cell, name)}>创业板指</div>
      <IndexCell value="3279.16" dir="down" diff="39.79" pct="-1.20%" className="pr-[14px] pl-[20px]" />
    </div>
  );
}

function StatusBar() {
  return (
    <footer className="flex h-[29px] items-center border-t border-[#3c3c3c] bg-[#222] text-[18px] whitespace-nowrap text-[#c8c8c8]">
      <div className="flex h-full w-[163px] shrink-0 items-center border-r border-[#3c3c3c] pl-[13px] text-[15px] text-[#b0b0b0]">
        <button className="flex items-center">
          <svg viewBox="0 0 18 17" className="h-[17px] w-[18px]" fill="none" stroke="currentColor" strokeWidth="1.500" aria-hidden="true">
            <path d="M11 5V1H1V13H5M3.500 4H9M3.500 7H7M16.500 4.500L8 13.500L7 16L10 15L17.500 6.500Z" />
          </svg>
          留言
        </button>
        <button className="ml-[13px] flex items-center">
          <svg viewBox="0 0 17 17" className="size-[17px]" fill="none" stroke="currentColor" strokeWidth="1.500" aria-hidden="true">
            <path d="M1 1H16V12.500H1ZM8.500 12.500V15.500M4 16H13M9.500 3L6.500 7H10L7.500 11" />
          </svg>
          最快主站
        </button>
      </div>
      <div className="flex h-full min-w-0 flex-1 items-center overflow-hidden border-r border-[#3c3c3c] pl-[10px]">
        <a href="#live" className="text-[15px] text-[#b0b0b0] underline underline-offset-4">
          24小时直播:
        </a>
        <span className="ml-[3px] flex w-[97px] shrink-0 justify-end overflow-hidden">控制人拟变更</span>
        <span className="ml-[32px] text-[#8c8c8c]">18:38</span>
        <span className="ml-[14px]">央行：5月份沪市日均交易量为4010.8亿元 环比上升22.20%</span>
        <span className="ml-[37px] text-[#8c8c8c]">18:38</span>
        <span className="ml-[15px]">
          35.7万/吨创新高 动力电池的<span className="font-['Noto_Sans_CJK_SC',sans-serif]">“心脏”</span>材
        </span>
      </div>
      <div className="flex w-[582px] shrink-0 items-center pl-2">
        <svg viewBox="0 0 10 15" className="h-[15px] w-[10px]" fill="none" stroke="#37e061" strokeWidth="2" aria-hidden="true">
          <path d="M5 0V13M1 9L5 13.500L9 9" />
        </svg>
        <a href="#news" className="ml-[14px] text-[#37e061]">
          浙江新能 封跌停板
        </a>
        <button className="ml-4 text-[15px]">[全部]</button>
        <label className="ml-[10px] flex h-5 w-[100px] shrink-0 items-center rounded-full bg-[#5c5c5c] pl-2">
          <svg viewBox="0 0 14 14" className="size-[14px] shrink-0" fill="none" stroke="#a0a0a0" strokeWidth="2" aria-hidden="true">
            <path d="M5.500 1A4.500 4.500 0 1 1 5.400 1ZM9 9L13 13" />
          </svg>
          <input type="search" aria-label="搜索" className="w-[60px] bg-transparent text-[13px] outline-none" />
        </label>
        <svg viewBox="0 0 16 17" className="ml-2 h-[17px] w-4 shrink-0" fill="#f4f9a0" aria-hidden="true">
          <path d="M8 0C9 0 9.500 1 9.500 2C13 3 13 6 13 9C13 11 16 12 16 14H0C0 12 3 11 3 9C3 6 3 3 6.500 2C6.500 1 7 0 8 0ZM6 15H10C10 17 6 17 6 15Z" />
        </svg>
        <svg viewBox="0 0 20 15" className="ml-[14px] h-[15px] w-5 shrink-0" fill="#2fb457" aria-hidden="true">
          <path d="M0 11H5V15H0ZM7.500 6H12.500V15H7.500ZM15 0H20V15H15Z" />
        </svg>
        <b className="ml-[10px] flex gap-[10px] font-['Liberation_Sans',sans-serif] text-[#a8a8a8]">
          <span>CN</span>
          <span>06/24</span>
          <span>19:00:15</span>
        </b>
      </div>
    </footer>
  );
}

export default function App() {
  return (
    <div className="overflow-hidden bg-[#070707] font-['Noto_Sans','Noto_Sans_CJK_SC',sans-serif]">
      <TitleBar />
      <MainNav />
      <main className="relative flex">
        <Splitter label="展开左侧" />
        <nav className="w-[34px] shrink-0 border-r border-[#3c3c3c] bg-[#1a1a1a] text-center text-[14px] text-[#8c8c8c]">
          {SIDE.map(({ chars, leading, active }) => (
            <button
              key={chars.join("")}
              className={clsx(
                "flex h-[92px] w-full flex-col items-center justify-center border-b border-[#505050]",
                leading,
                active && "bg-[#ea5504] text-white",
              )}
            >
              {chars.map((c) => (
                <span key={c}>{c}</span>
              ))}
            </button>
          ))}
        </nav>
        <div className="min-w-0 flex-1">
          <Toolbar />
          <ChartArea />
          <BottomBars />
        </div>
        <Splitter label="收起右侧" />
        <QuotePanel />
        <Annotations />
      </main>
      <IndexBar />
      <StatusBar />
    </div>
  );
}
